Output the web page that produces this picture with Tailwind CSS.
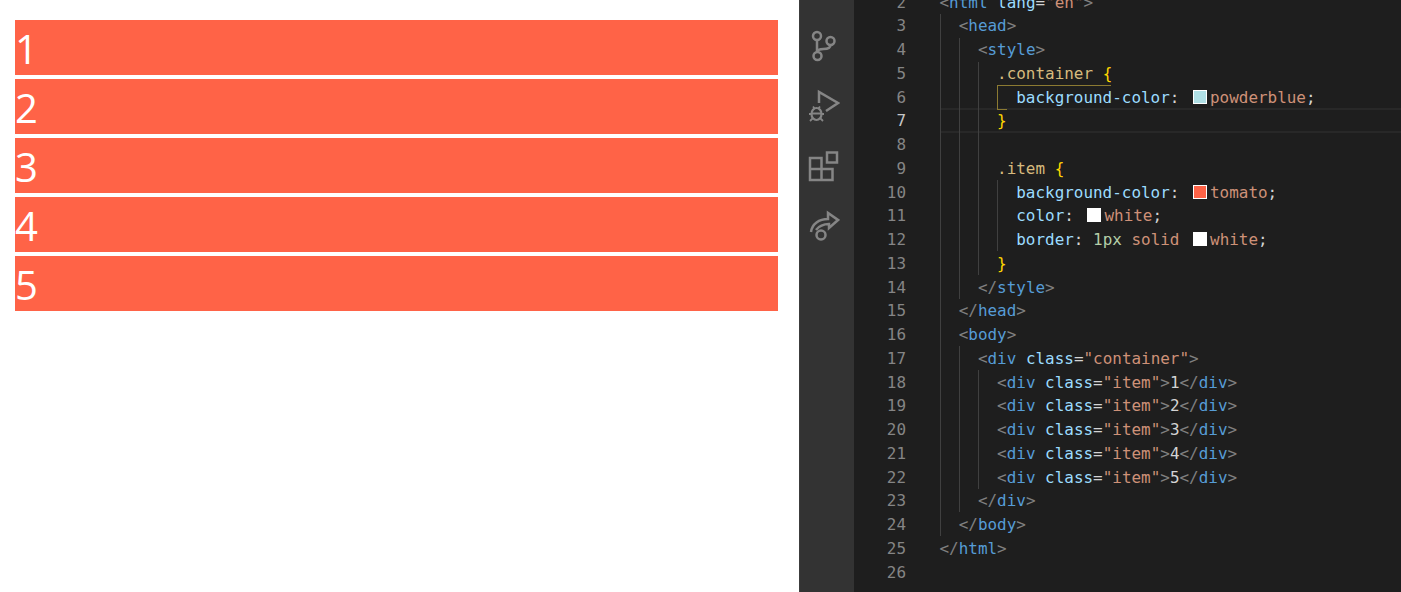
<!DOCTYPE html>
<html lang="en">
<head>
    <meta charset="UTF-8">
    <title>Container items</title>
    <script src="https://cdn.jsdelivr.net/npm/@tailwindcss/browser@4"></script>
</head>
<body class="bg-white overflow-hidden">
    <div class="flex h-[592px] w-[1401px] overflow-hidden">
        <!-- rendered page -->
        <div class="w-[799px] pl-[15px] pt-5 flex flex-col gap-1 font-['Open_Sans',sans-serif] text-[40px] leading-[55px] text-white">
            <div class="w-[763px] h-[55px] bg-[#ff6347] pt-[1px]">1</div>
            <div class="w-[763px] h-[55px] bg-[#ff6347] pt-[1px]">2</div>
            <div class="w-[763px] h-[55px] bg-[#ff6347] pt-[1px]">3</div>
            <div class="w-[763px] h-[55px] bg-[#ff6347] pt-[1px]">4</div>
            <div class="w-[763px] h-[55px] bg-[#ff6347] pt-[1px]">5</div>
        </div>

        <!-- activity bar -->
        <div class="w-[55px] bg-[#333333] border-l border-[#3c3c3c] flex flex-col gap-[24px] pl-[8px] pt-[28px] text-[#858585]">
            <svg class="w-[32px] h-[36px]" viewBox="0 0 32 36" fill="none" stroke="currentColor" stroke-width="2.5">
                <circle cx="9" cy="8" r="4" />
                <circle cx="9.5" cy="28" r="4" />
                <circle cx="22.5" cy="13" r="4" />
                <path d="M9 12v12M22.5 17c0 3-4 4-7 4-3 0-6 1-6 3" />
            </svg>
            <svg class="w-[32px] h-[36px]" viewBox="0 0 32 36" fill="none" stroke="currentColor" stroke-width="2.5">
                <path d="M11 15V4l19 11-12 8" />
                <ellipse cx="8.500" cy="26" rx="5" ry="6" stroke-width="2.200" />
                <path d="M4 25.500h9M5 18.500l2 2.500M12 18.500l-2 2.500M1 26h3M13 26h3M2 33l3-3M15 33l-3-3" stroke-width="1.800" />
            </svg>
            <svg class="w-[32px] h-[36px]" viewBox="0 0 32 36" fill="none" stroke="currentColor" stroke-width="2.5">
                <path d="M2 10h11.500v11h11v11H2zM2 21h11.500v11" />
                <rect x="19" y="4.500" width="10" height="10" />
            </svg>
            <svg class="w-[32px] h-[36px]" viewBox="0 0 32 36" fill="none" stroke="currentColor" stroke-width="2.5">
                <path d="M3 24C4 16 11 11 20 11V5l10 7-9 8v-4C15 16 11 18 8 22" />
                <circle cx="13" cy="27" r="4.500" />
            </svg>
        </div>

        <!-- editor -->
        <div class="relative flex-1 bg-[#1e1e1e] overflow-hidden font-['DejaVu_Sans_Mono',monospace] text-[15.95px] leading-[23.75px]">
            <!-- active line and bracket match -->
            <div class="absolute left-[86px] right-0 top-[108px] h-[25px] border-y-2 border-[#282828]"></div>
            <div class="absolute left-[143px] top-[85px] w-[114px] h-[1px] bg-[#8b7a32]"></div>
            <div class="absolute left-[143px] top-[85px] w-[1px] h-[25px] bg-[#8b7a32]"></div>
            <div class="absolute left-[143px] top-[109px] w-[10px] h-[1px] bg-[#8b7a32]"></div>
            <!-- indent guides -->
            <div class="absolute left-[86px] top-[14px] w-[1px] h-[522px] bg-[#404040]"></div>
            <div class="absolute left-[105px] top-[38px] w-[1px] h-[261px] bg-[#404040]"></div>
            <div class="absolute left-[105px] top-[346px] w-[1px] h-[166px] bg-[#404040]"></div>
            <div class="absolute left-[124px] top-[62px] w-[1px] h-[213px] bg-[#404040]"></div>
            <div class="absolute left-[124px] top-[370px] w-[1px] h-[119px] bg-[#404040]"></div>
            <div class="absolute left-[143px] top-[180px] w-[1px] h-[71px] bg-[#404040]"></div>

            <div class="relative flex mt-[-9.5px]">
                <div class="w-[52px] text-right text-[#858585]">
                    <div>2</div><div>3</div><div>4</div><div>5</div><div>6</div>
                    <div class="text-[#c6c6c6]">7</div>
                    <div>8</div><div>9</div><div>10</div><div>11</div><div>12</div><div>13</div><div>14</div><div>15</div><div>16</div><div>17</div><div>18</div><div>19</div><div>20</div><div>21</div><div>22</div><div>23</div><div>24</div><div>25</div><div>26</div>
                </div>
                <div class="ml-[33.5px] text-[#d4d4d4] *:whitespace-pre">
                    <div><span class="text-[#808080]">&lt;</span><span class="text-[#569cd6]">html</span> <span class="text-[#9cdcfe]">lang</span>=<span class="text-[#ce9178]">"en"</span><span class="text-[#808080]">&gt;</span></div>
                    <div>  <span class="text-[#808080]">&lt;</span><span class="text-[#569cd6]">head</span><span class="text-[#808080]">&gt;</span></div>
                    <div>    <span class="text-[#808080]">&lt;</span><span class="text-[#569cd6]">style</span><span class="text-[#808080]">&gt;</span></div>
                    <div>      <span class="text-[#d7ba7d]">.container</span> <span class="text-[#ffd700]">{</span></div>
                    <div>        <span class="text-[#9cdcfe]">background-color</span>: <span class="inline-block w-[14px] h-[14px] ml-[4px] mr-[3px] align-[-1px] border border-white bg-[#b0e0e6]"></span><span class="text-[#ce9178]">powderblue</span>;</div>
                    <div>      <span class="text-[#ffd700]">}</span></div>
                    <div>&nbsp;</div>
                    <div>      <span class="text-[#d7ba7d]">.item</span> <span class="text-[#ffd700]">{</span></div>
                    <div>        <span class="text-[#9cdcfe]">background-color</span>: <span class="inline-block w-[14px] h-[14px] ml-[4px] mr-[3px] align-[-1px] border border-white bg-[#ff6347]"></span><span class="text-[#ce9178]">tomato</span>;</div>
                    <div>        <span class="text-[#9cdcfe]">color</span>: <span class="inline-block w-[14px] h-[14px] ml-[4px] mr-[3px] align-[-1px] border border-white bg-white"></span><span class="text-[#ce9178]">white</span>;</div>
                    <div>        <span class="text-[#9cdcfe]">border</span>: <span class="text-[#b5cea8]">1px</span> <span class="text-[#ce9178]">solid</span> <span class="inline-block w-[14px] h-[14px] ml-[4px] mr-[3px] align-[-1px] border border-white bg-white"></span><span class="text-[#ce9178]">white</span>;</div>
                    <div>      <span class="text-[#ffd700]">}</span></div>
                    <div>    <span class="text-[#808080]">&lt;/</span><span class="text-[#569cd6]">style</span><span class="text-[#808080]">&gt;</span></div>
                    <div>  <span class="text-[#808080]">&lt;/</span><span class="text-[#569cd6]">head</span><span class="text-[#808080]">&gt;</span></div>
                    <div>  <span class="text-[#808080]">&lt;</span><span class="text-[#569cd6]">body</span><span class="text-[#808080]">&gt;</span></div>
                    <div>    <span class="text-[#808080]">&lt;</span><span class="text-[#569cd6]">div</span> <span class="text-[#9cdcfe]">class</span>=<span class="text-[#ce9178]">"container"</span><span class="text-[#808080]">&gt;</span></div>
                    <div>      <span class="text-[#808080]">&lt;</span><span class="text-[#569cd6]">div</span> <span class="text-[#9cdcfe]">class</span>=<span class="text-[#ce9178]">"item"</span><span class="text-[#808080]">&gt;</span>1<span class="text-[#808080]">&lt;/</span><span class="text-[#569cd6]">div</span><span class="text-[#808080]">&gt;</span></div>
                    <div>      <span class="text-[#808080]">&lt;</span><span class="text-[#569cd6]">div</span> <span class="text-[#9cdcfe]">class</span>=<span class="text-[#ce9178]">"item"</span><span class="text-[#808080]">&gt;</span>2<span class="text-[#808080]">&lt;/</span><span class="text-[#569cd6]">div</span><span class="text-[#808080]">&gt;</span></div>
                    <div>      <span class="text-[#808080]">&lt;</span><span class="text-[#569cd6]">div</span> <span class="text-[#9cdcfe]">class</span>=<span class="text-[#ce9178]">"item"</span><span class="text-[#808080]">&gt;</span>3<span class="text-[#808080]">&lt;/</span><span class="text-[#569cd6]">div</span><span class="text-[#808080]">&gt;</span></div>
                    <div>      <span class="text-[#808080]">&lt;</span><span class="text-[#569cd6]">div</span> <span class="text-[#9cdcfe]">class</span>=<span class="text-[#ce9178]">"item"</span><span class="text-[#808080]">&gt;</span>4<span class="text-[#808080]">&lt;/</span><span class="text-[#569cd6]">div</span><span class="text-[#808080]">&gt;</span></div>
                    <div>      <span class="text-[#808080]">&lt;</span><span class="text-[#569cd6]">div</span> <span class="text-[#9cdcfe]">class</span>=<span class="text-[#ce9178]">"item"</span><span class="text-[#808080]">&gt;</span>5<span class="text-[#808080]">&lt;/</span><span class="text-[#569cd6]">div</span><span class="text-[#808080]">&gt;</span></div>
                    <div>    <span class="text-[#808080]">&lt;/</span><span class="text-[#569cd6]">div</span><span class="text-[#808080]">&gt;</span></div>
                    <div>  <span class="text-[#808080]">&lt;/</span><span class="text-[#569cd6]">body</span><span class="text-[#808080]">&gt;</span></div>
                    <div><span class="text-[#808080]">&lt;/</span><span class="text-[#569cd6]">html</span><span class="text-[#808080]">&gt;</span></div>
                    <div>&nbsp;</div>
                </div>
            </div>
        </div>
    </div>
</body>
</html>
